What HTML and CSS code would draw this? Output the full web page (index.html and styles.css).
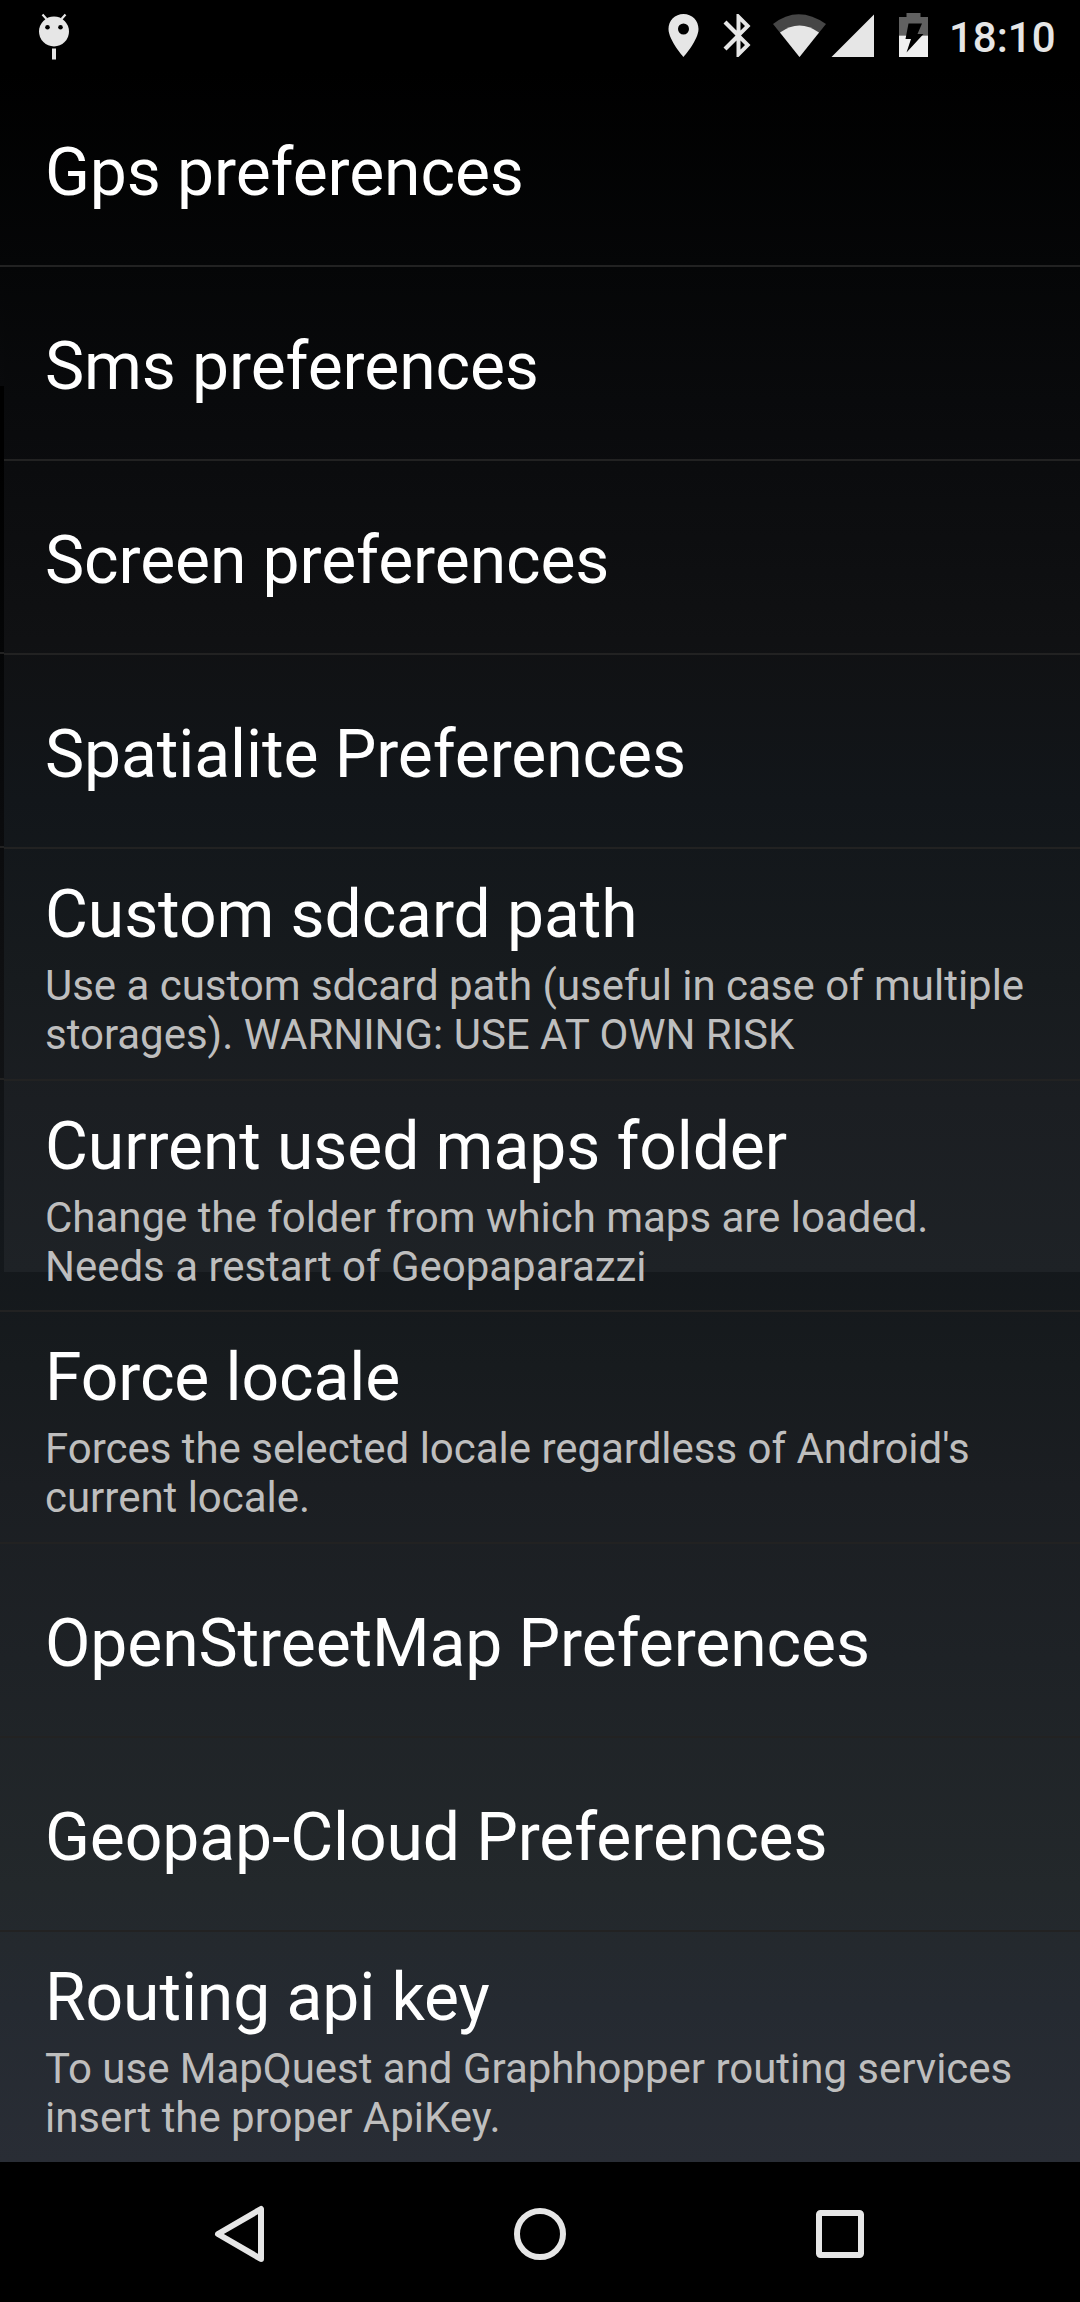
FILE: index.html
```html
<!DOCTYPE html>
<html lang="en">
<head>
<meta charset="utf-8">
<title>Preferences</title>
<link rel="stylesheet" href="styles.css">
</head>
<body>
<div class="screen">
  <header class="status">
    <svg class="debug" width="32" height="48" viewBox="0 0 32 48"><path d="M4.500 2.500l4 4.500M27.500 2.500l-4 4.500" stroke="#e6e6e6" stroke-width="2.200"/><circle cx="16" cy="19.500" r="15" fill="#e6e6e6"/><circle cx="9.500" cy="15.300" r="2.300"/><circle cx="22.500" cy="15.300" r="2.300"/><path d="M14 36.500h4v11h-4z" fill="#e6e6e6"/></svg>
    <svg class="icons" width="264" height="50" viewBox="660 10 264 50" fill="#e6e6e6">
      <path fill-rule="evenodd" d="M683.500 14C675 14 668.500 20.500 668.500 29C668.500 40 683.500 57 683.500 57S698.500 40 698.500 29C698.500 20.500 692 14 683.500 14zM683.500 23.500a5.500 5.500 0 1 1 0 11a5.500 5.500 0 0 1 0-11z"/>
      <path fill-rule="evenodd" d="M736.500 14h2L750.500 26L741 35.500L750.500 45L738.500 57h-2V40.500L726.500 50.500L723.500 47.500L735.500 35.500L723.500 23.500L726.500 20.500L736.500 30.500zM740.500 21.500v9l4.500-4.500zM740.500 40.500v9l4.500-4.500z"/>
      <path fill="#464646" d="M773 24Q798 4.500 826 24L799.500 57z"/>
      <path d="M780 32.500Q799.500 18.500 819 32.500L799.500 57z"/>
      <path d="M831.500 57L874 14.500V57z"/>
      <path fill="#616161" d="M899 35.500V17h7.500v-4h14v4H928v18.500z"/>
      <path fill="#f0f0f0" d="M899 35.500h29V57h-29z"/>
      <path fill="#000" d="M908.500 23.500h13.500l-4.500 10.500h6L906.500 52.500l4.500-13.500h-5.500z"/>
    </svg>
    <span class="clock">18:10</span>
  </header>
  <main class="list">
    <section class="row"><h2>Gps preferences</h2></section>
    <section class="row inset"><h2>Sms preferences</h2></section>
    <section class="row seam"><h2>Screen preferences</h2></section>
    <section class="row seam"><h2>Spatialite Preferences</h2></section>
    <section class="row detail seam"><h2>Custom sdcard path</h2><p>Use a custom sdcard path (useful in case of multiple<br>storages). WARNING: USE AT OWN RISK</p></section>
    <section class="row detail short"><h2>Current used maps folder</h2><p>Change the folder from which maps are loaded.<br>Needs a restart of Geopaparazzi</p></section>
    <section class="row detail"><h2>Force locale</h2><p>Forces the selected locale regardless of Android's<br>current locale.</p></section>
    <section class="row"><h2>OpenStreetMap Preferences</h2></section>
    <section class="row"><h2>Geopap-Cloud Preferences</h2></section>
    <section class="row detail last"><h2>Routing api key</h2><p>To use MapQuest and Graphhopper routing services<br>insert the proper ApiKey.</p></section>
  </main>
  <nav class="nav">
    <svg width="52" height="60" viewBox="0 0 52 60"><path d="M47 5v50L4 30z"/></svg>
    <svg width="52" height="60" viewBox="0 0 52 60"><circle cx="26" cy="30" r="23"/></svg>
    <svg width="52" height="60" viewBox="0 0 52 60"><rect x="5" y="9" width="42" height="42" rx="1.500"/></svg>
  </nav>
</div>
</body>
</html>
```
FILE: styles.css
```css
* { box-sizing: border-box; }
body { margin: 0; background: #000; }
.screen {
  display: flex;
  flex-direction: column;
  width: 1080px;
  height: 2302px;
  font-family: Roboto, sans-serif;
  background:
    linear-gradient(#000 0, #000 70px, #050607 265px, #090a0c 400px, #101113 640px, #12161a 800px, #171b1e 980px, #1b1e22 1100px, #1e2226 1272px) 4px 0 / 1076px 1272px no-repeat,
    linear-gradient(#000 0, #000 70px, #050607 265px, #090a0c 386px) 0 0 / 1080px 386px no-repeat,
    linear-gradient(#000 0, #000 70px, #050607 265px, #090a0c 400px, #101113 640px, #12161a 800px, #171b1e 980px, #1b1e22 1100px, #1e2226 1272px, #23282b 1500px, #252a31 1620px, #292d35 1776px) 0 386px / 1080px 1776px no-repeat,
    #000;
}
.status {
  display: flex;
  align-items: flex-start;
  height: 73px;
  flex: none;
}
.debug { margin: 12px 0 0 38px; }
.icons { margin: 10px 0 0 590px; overflow: visible; }
.clock {
  margin-left: 25px;
  color: #e6e6e6;
  font-size: 42px;
  font-weight: 500;
  line-height: 50px;
  padding-top: 13px;
}
.list { flex: none; height: 2089px; }
.row {
  display: flex;
  flex-direction: column;
  justify-content: center;
  height: 194px;
  padding: 6px 45px 2px;
  background: linear-gradient(#222, #222) 0 100% / 100% 2px no-repeat;
}
/* rows whose divider breaks at the left edge */
.inset { background-position: 4px 100%; }
.seam {
  background:
    linear-gradient(#222, #222) 4px 100% / 100% 2px no-repeat,
    linear-gradient(#222, #222) 0 calc(100% - 1px) / 4px 2px no-repeat;
}
.detail { height: 232px; padding-top: 6px; }
.short { height: 231px; padding-top: 8px; }
.last { height: 230px; padding-bottom: 0; background: none; }
h2 {
  margin: 0;
  color: #fff;
  font-size: 66px;
  font-weight: 400;
  line-height: 77px;
  letter-spacing: -0.1px;
  white-space: nowrap;
}
p {
  margin: 8px 0 0;
  color: #bebebe;
  font-size: 42px;
  line-height: 49px;
  letter-spacing: -0.02px;
  white-space: nowrap;
}
.nav {
  display: flex;
  flex: 1;
  align-items: center;
  justify-content: center;
  gap: 248px;
  padding-top: 4px;
}
.nav svg { fill: none; stroke: #e6e6e6; stroke-width: 6; stroke-linejoin: round; }
```
